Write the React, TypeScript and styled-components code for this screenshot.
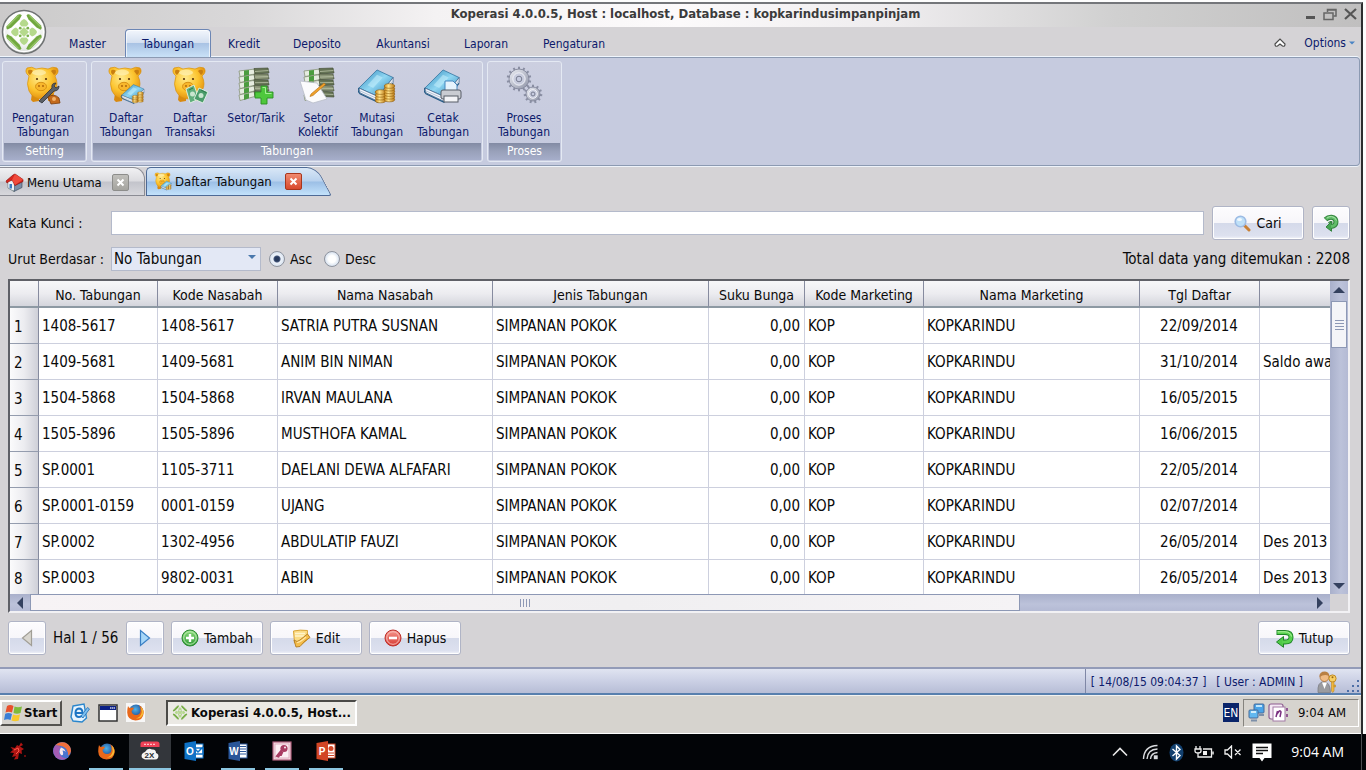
import React from 'react';
import styled, { createGlobalStyle, css } from 'styled-components';

const ui = '"DejaVu Sans Condensed", "DejaVu Sans", "Noto Sans", sans-serif';
const navy = '#0c1a6b';

const GlobalStyle = createGlobalStyle`
  *, *::before, *::after { box-sizing: border-box; }
  html, body { margin: 0; padding: 0; }
  body { background: #fdfdfd; font-family: ${ui}; color: #0a0a0a; }
  button, input, select { font-family: inherit; color: inherit; margin: 0; }
  button { cursor: default; }
`;

/* ---------- shell ---------- */

const Screen = styled.div`
  display: flex;
  flex-direction: column;
  height: 100vh;
  min-width: 960px;
  overflow: hidden;
`;

const Session = styled.div`
  flex: 1;
  min-height: 0;
  display: flex;
  flex-direction: column;
  margin: 2px 3px 0 0;
  border-top: 2px solid #74767a;
  border-right: 2px solid #2c2c2e;
  background: #d5d3d6;
`;

const AppWindow = styled.main`
  flex: 1;
  min-height: 0;
  display: flex;
  flex-direction: column;
`;

/* ---------- title + menu ---------- */

const Head = styled.header`
  position: relative;
  flex: none;
`;

const TitleBar = styled.div`
  height: 23px;
  display: flex;
  justify-content: flex-end;
  align-items: center;
  position: relative;
  background: linear-gradient(90deg, #cbcaca 0%, #d9d8d9 18%, #f4f2f3 32%, #fcfafb 50%, #eeecee 66%, #d0d0d0 82%, #c0bfbf 100%);
`;

const Title = styled.h1`
  flex: 1;
  margin: 0;
  padding: 0 0 3px 94px;
  text-align: center;
  font: bold 13px/20px ${ui};
  color: #3b3b3b;
  white-space: nowrap;
`;

const WindowButtons = styled.div`
  display: flex;
  width: 84px;
  padding: 0 4px 3px 29px;
  justify-content: space-between;
`;

const PlainButton = styled.button`
  border: 0;
  padding: 0;
  background: none;
  display: flex;
  align-items: center;
  justify-content: center;
`;

const Orb = styled.button`
  position: absolute;
  z-index: 2;
  left: 1px;
  top: 5px;
  width: 46px;
  height: 46px;
  padding: 0;
  border: 0;
  background: none;
`;

const MenuBar = styled.nav`
  height: 30px;
  display: flex;
  align-items: flex-end;
  padding: 0 6px 0 50px;
`;

const MenuTab = styled.button<{ $w: number; $active?: boolean }>`
  width: ${p => p.$w}px;
  height: 28px;
  padding: 0;
  border: 1px solid transparent;
  border-bottom: 0;
  border-radius: 4px 4px 0 0;
  background: none;
  font-size: 12px;
  color: ${navy};
  ${p => p.$active && css`
    border-color: #6c86b4;
    background: linear-gradient(180deg, #f2f6fc 0%, #d3dff0 48%, #a9c3e4 50%, #c9e1f7 100%);
    box-shadow: inset 1px 1px 0 #ffffffaa, inset -1px 0 0 #ffffffaa;
  `}
`;

const MenuRight = styled.div`
  margin-left: auto;
  height: 28px;
  display: flex;
  align-items: center;
  gap: 18px;
`;

const OptionsButton = styled(PlainButton)`
  gap: 3px;
  font-size: 12px;
  color: ${navy};
`;

/* ---------- ribbon ---------- */

const Ribbon = styled.section`
  flex: none;
  height: 109px;
  margin-right: 1px;
  padding: 3px 2px;
  display: flex;
  gap: 4px;
  border: 1px solid #8c9ab2;
  border-left: 0;
  border-radius: 0 4px 4px 0;
  background: #c6cbdf;
  box-shadow: 0 -1px 0 #f0f6fd, 0 1px 0 #eef3fa;
`;

const Group = styled.section<{ $w: number }>`
  width: ${p => p.$w}px;
  height: 101px;
  display: flex;
  flex-direction: column;
  border: 1px solid #e4e9f3;
  border-radius: 3px;
  background: linear-gradient(180deg, #cccfe0, #c4c9de);
`;

const GroupItems = styled.div`
  flex: 1;
  display: flex;
`;

const GroupTitle = styled.h2`
  margin: 0 1px 1px;
  height: 17px;
  font: 12px/17px ${ui};
  text-align: center;
  color: #fff;
  background: linear-gradient(180deg, #828ba4, #99a1ba 50%, #a6aeca);
`;

const RibbonButton = styled.button<{ $w: number }>`
  width: ${p => p.$w}px;
  height: 80px;
  padding: 4px 0 0;
  border: 0;
  background: none;
  display: flex;
  flex-direction: column;
  align-items: center;
  gap: 6px;
  font-size: 12px;
  line-height: 14px;
  color: ${navy};
  white-space: pre;
  svg { display: block; flex: none; }
`;

/* ---------- document tabs ---------- */

const activeTabFill = 'linear-gradient(180deg, #d9e7f6 0%, #b9d2ee 48%, #9cbfe6 52%, #c3e2fb 100%)';

const DocTabs = styled.nav`
  flex: none;
  display: flex;
  height: 29px;
  margin-top: 1px;
`;

const DocTab = styled.div<{ $w: number; $active?: boolean }>`
  position: relative;
  z-index: 0;
  width: ${p => p.$w}px;
  height: 29px;
  padding: ${p => (p.$active ? '0 30px 0 8px' : '2px 17px 0 5px')};
  display: flex;
  align-items: center;
  &::before {
    content: '';
    position: absolute;
    z-index: -1;
    inset: 0 1px 0 0;
    border: 1px solid #8b8c94;
    border-left: 0;
    border-radius: 0 12px 0 0;
    background: linear-gradient(180deg, #f1f1f3 0%, #dcdce0 48%, #c3c4cb 52%, #d7d7dc 100%);
  }
  ${p => p.$active && css`
    &::before {
      inset: 0 0 0 60px;
      border-color: #4e6a96;
      border-radius: 0 10px 3px 0;
      transform: skewX(28deg);
      transform-origin: left bottom;
      background: ${activeTabFill};
    }
    &::after {
      content: '';
      position: absolute;
      z-index: -1;
      inset: 0 60px 0 0;
      border: 1px solid #4e6a96;
      border-right: 0;
      border-radius: 5px 0 0 0;
      background: ${activeTabFill};
    }
  `}
`;

const DocTabLabel = styled(PlainButton)`
  gap: 3px;
  font-size: 13px;
  white-space: nowrap;
`;

const CloseBox = styled.button<{ $hot?: boolean }>`
  width: 17px;
  height: 17px;
  margin-left: auto;
  padding: 0;
  display: flex;
  align-items: center;
  justify-content: center;
  border-radius: 2px;
  border: 1px solid ${p => (p.$hot ? '#a8361d' : '#8d8d8b')};
  background: ${p => (p.$hot ? 'linear-gradient(#f08a70, #d8492c)' : 'linear-gradient(#c0bfbb, #a5a49f)')};
`;

/* ---------- search ---------- */

const Panel = styled.section`
  flex: 1;
  min-height: 0;
  display: flex;
  flex-direction: column;
  padding: 10px 11px 12px 8px;
`;

const SearchRow = styled.form`
  display: flex;
  align-items: center;
  height: 34px;
  gap: 8px;
`;

const FieldLabel = styled.label`
  width: 95px;
  font-size: 14px;
  white-space: nowrap;
`;

const TextBox = styled.input`
  flex: 1;
  min-width: 0;
  height: 24px;
  padding: 0 4px;
  border: 1px solid #b4bacb;
  background: #fff;
  font-size: 14px;
`;

const PushButton = styled.button<{ $w: number }>`
  width: ${p => p.$w}px;
  height: 34px;
  flex: none;
  padding: 0;
  display: flex;
  align-items: center;
  justify-content: center;
  gap: 5px;
  font-size: 14px;
  border: 1px solid #b0b4c6;
  border-radius: 3px;
  background: linear-gradient(180deg, #fdfcfe 0%, #f7f6fa 49%, #d5daea 51%, #dde1ef 90%, #f4f5fa 100%);
  box-shadow: inset 0 0 0 1px #ffffff;
`;

const SortRow = styled.div`
  display: flex;
  align-items: center;
  height: 24px;
  margin: 7px 0 8px;
  gap: 8px;
  font-size: 14px;
`;

const SelectWrap = styled.div`
  display: grid;
  width: 150px;
  align-items: center;
  > * { grid-area: 1 / 1; }
  > svg { justify-self: end; margin: 0 5px 4px 0; pointer-events: none; }
`;

const Select = styled.select`
  appearance: none;
  width: 100%;
  height: 24px;
  padding: 0 20px 0 2px;
  border: 1px solid #b4bacb;
  border-radius: 0;
  background: #e3e8f5;
  font-size: 15px;
`;

const RadioLabel = styled.label`
  display: flex;
  align-items: center;
  gap: 5px;
  margin-right: 4px;
`;

const Radio = styled.input`
  appearance: none;
  width: 16px;
  height: 16px;
  border: 1px solid #8e939e;
  border-radius: 50%;
  background: radial-gradient(circle, #fff 0 35%, #d4dfee 75%);
  &:checked { background: radial-gradient(circle, #27395c 0 2px, #44567a 3px, #eef3fa 4px, #d4dfee 8px); }
`;

const Total = styled.output`
  margin-left: auto;
  font-size: 15px;
`;

/* ---------- grid ---------- */

const GridFrame = styled.div`
  flex: 1;
  min-height: 0;
  display: grid;
  grid-template-columns: minmax(0, 1fr) 18px;
  grid-template-rows: minmax(0, 1fr) 17px;
  border: 2px solid #f2f1f4;
  border-top-color: #5f6067;
  border-left-color: #5f6067;
  background: #d5d3d6;
`;

const Viewport = styled.div`
  overflow: hidden;
  background: #fff;
`;

const Table = styled.table`
  width: 100%;
  table-layout: fixed;
  border-collapse: separate;
  border-spacing: 0;
  font-size: 15px;
`;

const Th = styled.th`
  height: 27px;
  padding: 2px 0 0;
  font-size: 14px;
  font-weight: normal;
  white-space: nowrap;
  border-right: 1px solid #868b9f;
  border-bottom: 2px solid #8d99a3;
  background: linear-gradient(180deg, #f7f7f9 0%, #ececf0 50%, #d4d5dc 100%);
  &:last-child { border-right: 0; }
`;

const RowHead = styled.th`
  height: 36px;
  padding: 2px 0 0 4px;
  text-align: left;
  font-weight: normal;
  border-right: 1px solid #868b9f;
  border-bottom: 1px solid #949cae;
  background: linear-gradient(90deg, #fbfbfc 0%, #ececf0 50%, #cfd0d8 100%);
`;

const Td = styled.td<{ $align?: 'left' | 'right' | 'center' }>`
  height: 36px;
  padding: 0 4px 0 3px;
  text-align: ${p => p.$align || 'left'};
  white-space: nowrap;
  overflow: hidden;
  border-right: 1px solid #cdd0de;
  border-bottom: 1px solid #cdd0de;
  &:last-child { border-right: 0; padding-right: 0; }
`;

const VScroll = styled.div`
  display: flex;
  flex-direction: column;
  align-items: center;
  background: linear-gradient(90deg, #a9b0cb, #bcc2da 60%, #b4bad4);
`;

const HScroll = styled.div`
  display: flex;
  align-items: center;
  background: linear-gradient(180deg, #a9b0cb, #bcc2da 60%, #b4bad4);
`;

const Arrow = styled(PlainButton)`
  width: 20px;
  height: 17px;
  flex: none;
`;

const ThumbV = styled.div`
  width: 16px;
  height: 47px;
  margin-top: 3px;
  display: flex;
  align-items: center;
  justify-content: center;
  border: 1px solid #8d98b5;
  background: #f4f4f8;
`;

const ThumbH = styled.div`
  width: 75%;
  height: 17px;
  display: flex;
  align-items: center;
  justify-content: center;
  border: 1px solid #8d98b5;
  background: linear-gradient(90deg, #f7f3f5, #f0eff1 60%, #f5f3f5);
`;

const Pusher = styled.span`
  flex: 1;
`;

const Actions = styled.div`
  flex: none;
  display: flex;
  align-items: center;
  gap: 7px;
  margin-top: 8px;
  font-size: 15px;
`;

const PageLabel = styled.span`
  width: 66px;
  white-space: nowrap;
`;

/* ---------- status bar ---------- */

const StatusBar = styled.footer`
  flex: none;
  height: 28px;
  display: flex;
  justify-content: flex-end;
  border-top: 2px solid #939bb8;
  border-bottom: 2px solid #587fae;
  background: linear-gradient(180deg, #e0e4f1 0%, #cdd2e6 45%, #b7bdd6 100%);
`;

const StatusInfo = styled.div`
  display: flex;
  align-items: center;
  gap: 10px;
  padding: 2px 1px 0 5px;
  border-left: 1px solid #7f87a6;
  font-size: 12px;
  color: ${navy};
  white-space: pre;
`;

const UserIcon = styled.span`
  display: flex;
  align-items: flex-end;
  gap: 10px;
  height: 22px;
  margin-left: 4px;
`;

/* ---------- session taskbar ---------- */

const ClassicBar = styled.footer`
  flex: none;
  height: 39px;
  padding: 3px 2px 7px 0;
  display: flex;
  align-items: center;
  border-top: 1px solid #f3f2ef;
  border-bottom: 1px solid #fff;
  background: #d6d3ce;
`;

const StartButton = styled.button`
  width: 62px;
  height: 26px;
  padding: 0 2px;
  display: flex;
  align-items: center;
  gap: 1px;
  font-size: 13px;
  font-weight: bold;
  border: 2px solid;
  border-color: #fff #55534f #55534f #fff;
  background: #d6d3ce;
`;

const QuickLaunch = styled.div`
  display: flex;
  gap: 8px;
  width: 104px;
  padding-left: 8px;
`;

const TaskButton = styled.button`
  width: 191px;
  height: 26px;
  padding: 0 4px;
  display: flex;
  align-items: center;
  gap: 3px;
  font-size: 13px;
  font-weight: bold;
  white-space: nowrap;
  border: 2px solid;
  border-color: #4b4a47 #fff #fff #4b4a47;
  background: #ebe9e4;
`;

const Language = styled.button`
  width: 16px;
  height: 19px;
  margin: 0 4px 0 auto;
  padding: 0;
  border: 0;
  background: #0a246a;
  color: #fff;
  font-size: 12px;
`;

const ClassicTray = styled.div`
  width: 116px;
  height: 28px;
  padding: 0 12px 0 4px;
  display: flex;
  align-items: center;
  gap: 2px;
  font-size: 13px;
  border: 1px solid;
  border-color: #85837e #fff #fff #85837e;
  time { margin-left: auto; }
`;

/* ---------- host taskbar ---------- */

const HostBar = styled.footer`
  flex: none;
  height: 36px;
  display: flex;
  padding-right: 4px;
  background: #020407;
  color: #fff;
`;

const HostApp = styled.button<{ $open?: boolean; $active?: boolean }>`
  width: ${p => (p.$active ? 42 : 34)}px;
  margin: 0 ${p => (p.$active ? 1 : 5)}px;
  padding: 0;
  display: flex;
  align-items: center;
  justify-content: center;
  border: 0;
  border-bottom: 2px solid ${p => (p.$open ? '#8cc6e0' : 'transparent')};
  background: ${p => (p.$active ? '#33363b' : 'transparent')};
`;

const HostApps = styled.nav`
  display: flex;
  margin-left: -4px;
`;

const HostTray = styled.div`
  margin-left: auto;
  display: flex;
  align-items: center;
  gap: 8px;
  border-right: 1px solid #4a4c50;
  padding-right: 17px;
  font: 14px/20px "Open Sans", "Noto Sans", sans-serif;
  > svg:nth-of-type(n + 3) { margin-left: 2px; }
  > svg:first-child { margin-right: 6px; }
  time { margin-left: 11px; }
`;

/* ---------- drawings ---------- */

const HiddenSvg = styled.svg`
  position: absolute;
`;

const Defs = () => (
  <HiddenSvg width="0" height="0" aria-hidden="true">
    <defs>
      <radialGradient id="pigG" cx="0.4" cy="0.35" r="0.7">
        <stop offset="0" stopColor="#ffe98a" />
        <stop offset="0.55" stopColor="#fcc42f" />
        <stop offset="1" stopColor="#e08a0c" />
      </radialGradient>
      <linearGradient id="bookG" x1="0" y1="0" x2="1" y2="1">
        <stop offset="0" stopColor="#2f86b8" />
        <stop offset="0.5" stopColor="#8fd6f2" />
        <stop offset="1" stopColor="#2a7fb2" />
      </linearGradient>
      <linearGradient id="goldG" x1="0" y1="0" x2="1" y2="0">
        <stop offset="0" stopColor="#c98412" />
        <stop offset="0.4" stopColor="#ffe48c" />
        <stop offset="1" stopColor="#b87410" />
      </linearGradient>
      <radialGradient id="orbG" cx="0.5" cy="0.4" r="0.6">
        <stop offset="0.5" stopColor="#ffffff" />
        <stop offset="0.85" stopColor="#e4e7e4" />
        <stop offset="1" stopColor="#a9adab" />
      </radialGradient>
      <linearGradient id="greenG" x1="0" y1="0" x2="0" y2="1">
        <stop offset="0" stopColor="#8fdc7d" />
        <stop offset="1" stopColor="#2b9a34" />
      </linearGradient>
      <linearGradient id="redG" x1="0" y1="0" x2="0" y2="1">
        <stop offset="0" stopColor="#f59a90" />
        <stop offset="1" stopColor="#d6372f" />
      </linearGradient>
      <linearGradient id="steelG" x1="0" y1="0" x2="1" y2="1">
        <stop offset="0" stopColor="#eef0f6" />
        <stop offset="1" stopColor="#8e93a6" />
      </linearGradient>
      <radialGradient id="foxG" cx="0.45" cy="0.35" r="0.6">
        <stop offset="0" stopColor="#4fb3ea" />
        <stop offset="1" stopColor="#15408c" />
      </radialGradient>
    </defs>
  </HiddenSvg>
);

const Cross = () => (
  <g>
    {[0, 90, 180, 270].map(a => (
      <g key={a} transform={`rotate(${a} 23 23)`}>
        <path d="M5.500 17.500 L16.500 6 Q19 4.500 20.800 6.200 L18.500 10.500 L10.500 18.500 L6.500 20.500 Q4.800 19.500 5.500 17.500Z" fill="#72a83f" />
        <path d="M6.500 17.500 L17.500 6.500" stroke="#94c466" strokeWidth="1.200" fill="none" />
        <path d="M23 10 Q26 11 27.500 15 L25.500 17.500 L20.500 17.500 L18.500 15 Q20 11 23 10Z" fill="#b5d98c" />
        <circle cx="19.200" cy="19.200" r="1.400" fill="#7bb04c" />
      </g>
    ))}
    <path d="M23 18 L28 23 L23 28 L18 23Z" fill="#b5d98c" />
  </g>
);

const OrbIcon = () => (
  <svg width="46" height="46" viewBox="0 0 46 46">
    <circle cx="23" cy="23" r="21.500" fill="url(#orbG)" stroke="#6f7273" strokeWidth="1.500" />
    <circle cx="23" cy="23" r="19.500" fill="none" stroke="#fff" strokeWidth="1.500" />
    <Cross />
  </svg>
);

const Pig = () => (
  <g>
    <path d="M7 34 L8 27 L15 30 L15 35 L9 36Z M24 35 L24 28 L30 27 L29 34Z" fill="#d98a10" />
    <path d="M3 2 Q8 0 12 3 Q18 1 24 3 Q29 0 33 2 Q36 6 31 10 Q35 18 31 25 Q26 33 18 33 Q9 33 5 25 Q2 18 5 10 Q0 6 3 2Z" fill="url(#pigG)" stroke="#d8920f" strokeWidth="0.700" />
    <path d="M4.500 4 Q7 3 9 5 L6 9 Q3 7 4.500 4Z M31.500 4 Q29 3 27 5 L30 9 Q33 7 31.500 4Z" fill="#c97f10" />
    <ellipse cx="15" cy="6.500" rx="7" ry="3" fill="#fff6c4" opacity="0.600" />
    <circle cx="13" cy="13" r="1.100" fill="#59340a" />
    <circle cx="22" cy="13" r="1.100" fill="#59340a" />
    <ellipse cx="17" cy="20.500" rx="5.500" ry="4.200" fill="#f8b72c" stroke="#cf860d" strokeWidth="0.800" />
    <circle cx="15" cy="20" r="0.900" fill="#a85f08" />
    <circle cx="19" cy="20" r="0.900" fill="#a85f08" />
  </g>
);

const Book = () => (
  <g>
    <path d="M1 20 L20 1 L37 9 L21 29Z" fill="url(#bookG)" stroke="#2b6f9c" strokeWidth="0.800" />
    <path d="M1 20 L21 29 L37 9 L37 14 L21 34 L2 25Z" fill="#f2f5fa" stroke="#41658c" strokeWidth="0.800" />
    <path d="M2 23 L21 31.500 L37 12" fill="none" stroke="#9fb4cc" strokeWidth="0.800" />
    <path d="M1 20 Q-1 23 2 26 L21 35 L37 15" fill="none" stroke="#235a85" strokeWidth="1.200" />
    <path d="M10 17 L20 6 L26 9 L16 20Z" fill="#c7effc" opacity="0.550" />
  </g>
);

const Coins = () => (
  <g stroke="#8f5c0b" strokeWidth="0.600" fill="url(#goldG)">
    {[0, 1, 2, 3].map(i => <ellipse key={i} cx="5.500" cy={16.500 - i * 2.800} rx="5.200" ry="2.300" />)}
    {[0, 1, 2, 3, 4, 5].map(i => <ellipse key={i} cx="14.500" cy={15.500 - i * 2.700} rx="5.200" ry="2.300" />)}
  </g>
);

const Bills = () => (
  <g>
    <path d="M1 4 L9 0 L14 14 L5 18Z" fill="#5fae7c" stroke="#e4f2e6" strokeWidth="0.900" />
    <path d="M14 3 L23 7 L18 18 L9 14Z" fill="#4b9c6b" stroke="#e4f2e6" strokeWidth="0.900" />
    <circle cx="7.500" cy="9" r="2.500" fill="#c9e6cf" />
    <circle cx="16" cy="10.500" r="2.500" fill="#c9e6cf" />
    <path d="M4 5 L8 3 M16 5 L21 7.500" stroke="#2f7a4c" strokeWidth="1" />
  </g>
);

const CashStack = () => (
  <g>
    {[0, 1, 2, 3, 4].map(i => (
      <g key={i}>
        <path d={`M2 ${5 + i * 6} L18 ${3 + i * 5.600} L18 ${8 + i * 5.600} L3 ${10.500 + i * 6}Z`} fill="#e6ece0" stroke="#7d8a6c" strokeWidth="0.700" />
        <path d={`M7 ${4.500 + i * 6} L12 ${4 + i * 5.800} L12 ${9 + i * 5.800} L7 ${10 + i * 6}Z`} fill="#4b9c3e" />
        <path d={`M17 ${2.500 + i * 5.600} L31 ${2 + i * 6} L32 ${7 + i * 6} L18 ${8 + i * 5.600}Z`} fill={i % 2 ? '#8a9477' : '#657355'} stroke="#47523a" strokeWidth="0.700" />
        <path d={`M18 ${5.500 + i * 5.600} L31.500 ${4.500 + i * 6}`} stroke="#b9c2a6" strokeWidth="0.800" />
      </g>
    ))}
  </g>
);

const gear = (cx: number, cy: number, r: number, teeth: number) => {
  const items: React.ReactNode[] = [];
  for (let i = 0; i < teeth; i += 1) {
    items.push(
      <rect key={i} x={cx - 1} y={cy - r - 2.300} width="2" height="4" fill="#8a8fa3" transform={`rotate(${(360 / teeth) * i} ${cx} ${cy})`} />,
    );
  }
  return (
    <g>
      {items}
      <circle cx={cx} cy={cy} r={r} fill="url(#steelG)" stroke="#82879b" strokeWidth="0.900" />
      <circle cx={cx} cy={cy} r={r * 0.620} fill="#c9cdde" stroke="#f4f5f9" strokeWidth="0.900" />
      <circle cx={cx} cy={cy} r={r * 0.280} fill="#c6cbdf" stroke="#777c90" strokeWidth="1" />
    </g>
  );
};

type IconKind = 'setup' | 'pigbook' | 'pigcash' | 'cashplus' | 'cashnote' | 'bookcoins' | 'bookprint' | 'gears';

const RibbonIcon = ({ kind }: { kind: IconKind }) => (
  <svg width="38" height="39" viewBox="0 0 38 39">
    {(kind === 'setup' || kind === 'pigbook' || kind === 'pigcash') && <Pig />}
    {kind === 'setup' && (
      <g>
        <path d="M15 35 L28 22 Q27 17 32 17 L30 20 L32 22 L35 20 Q35 25 30 25 L18 37Z" fill="#5b5f66" stroke="#2f3237" strokeWidth="0.800" />
        <path d="M24 31 Q30 27 35 32 L36 37 L27 38Z" fill="#c46a1c" stroke="#7d3d0a" strokeWidth="0.800" />
        <circle cx="30" cy="33" r="2" fill="#f3b26a" />
      </g>
    )}
    {kind === 'pigbook' && (
      <g>
        <g transform="translate(14 18) scale(0.620 0.560)"><Book /></g>
        <g transform="translate(25 26) scale(0.580)"><Coins /></g>
      </g>
    )}
    {kind === 'pigcash' && <g transform="translate(14 19)"><Bills /></g>}
    {kind === 'cashplus' && (
      <g>
        <CashStack />
        <path d="M24 20 H30 V26 H36 V32 H30 V38 H24 V32 H18 V26 H24Z" fill="#4ec83c" stroke="#2a8f22" strokeWidth="0.900" />
        <path d="M25.500 21.500 H28.500 V27.500 H34.500" fill="none" stroke="#a4ee94" strokeWidth="1" />
      </g>
    )}
    {kind === 'cashnote' && (
      <g>
        <g transform="translate(3 0)"><CashStack /></g>
        <path d="M1 15 L18 17 L28 33 L14 37 L7 34Z" fill="#fbfbfd" stroke="#b8bcc8" strokeWidth="0.800" />
        <path d="M12 28 L25 17 L26.500 18.500 L14 29.500 L11 30.500Z" fill="#f0a12b" stroke="#b06c10" strokeWidth="0.600" />
      </g>
    )}
    {(kind === 'bookcoins' || kind === 'bookprint') && <g transform="translate(0 3) scale(0.950)"><Book /></g>}
    {kind === 'bookcoins' && <g transform="translate(17 18)"><Coins /></g>}
    {kind === 'bookprint' && (
      <g>
        <path d="M21 15 H29 L33 19 V27 H21Z" fill="#e6f3fd" stroke="#4687bf" strokeWidth="1" />
        <rect x="17" y="24" width="20" height="9" rx="2" fill="#c9ccd2" stroke="#575c66" strokeWidth="1" />
        <rect x="20" y="30" width="14" height="6" fill="#f3f4f7" stroke="#575c66" strokeWidth="1" />
      </g>
    )}
    {kind === 'gears' && (
      <g>
        {gear(14, 13, 10, 14)}
        {gear(28, 28, 7, 11)}
      </g>
    )}
  </svg>
);

const Chevron = ({ dir, c = '#34415f', s = 12 }: { dir: 'up' | 'down' | 'left' | 'right'; c?: string; s?: number }) => {
  const turn = { up: 0, right: 90, down: 180, left: 270 }[dir];
  return (
    <svg width={s} height={s} viewBox="0 0 12 12">
      <path d="M0 9 L6 3 L12 9Z" fill={c} transform={`rotate(${turn} 6 6)`} />
    </svg>
  );
};

const XMark = () => (
  <svg width="9" height="9" viewBox="0 0 9 9"><path d="M1.500 1.500 L7.500 7.500 M7.500 1.500 L1.500 7.500" stroke="#fff" strokeWidth="2" /></svg>
);

const HouseIcon = () => (
  <svg width="19" height="19" viewBox="0 0 19 19">
    <path d="M3 8 L9 12 V18.500 L3 15Z" fill="#dfe6ee" stroke="#566" strokeWidth="0.600" />
    <path d="M9 12 L17 8 V14.500 L9 18.500Z" fill="#7c8ea8" stroke="#345" strokeWidth="0.600" />
    <path d="M1 8 L8 2 L10 1 L18 6.500 L18 8.500 L10 12.500 L7 7 L2 10Z" fill="#d8261e" stroke="#8d120e" strokeWidth="0.700" />
    <path d="M7 7 L10 1 L18 6.500 L10 12Z" fill="#ef4a3c" />
    <path d="M3.500 9 L7 8 L9 12 V17.500 L3.500 14.500Z" fill="#eef2f7" />
    <rect x="4.500" y="11" width="2.500" height="4.500" fill="#3b7bc0" />
  </svg>
);

const MiniPig = () => (
  <svg width="18" height="19" viewBox="0 0 38 39">
    <Pig />
    <g transform="translate(14 18) scale(0.620 0.560)"><Book /></g>
    <g transform="translate(25 26) scale(0.580)"><Coins /></g>
  </svg>
);

const SearchIcon = () => (
  <svg width="17" height="17" viewBox="0 0 17 17">
    <path d="M10 10 L15 15" stroke="#c98035" strokeWidth="3" strokeLinecap="round" />
    <circle cx="6.500" cy="6.500" r="5.300" fill="#bfe0f8" stroke="#9dbbe4" strokeWidth="1.600" />
    <ellipse cx="5.500" cy="4.500" rx="2.500" ry="1.600" fill="#fff" opacity="0.800" />
  </svg>
);

const RefreshIcon = () => (
  <svg width="16" height="18" viewBox="0 0 16 18" fill="none">
    <path d="M2.500 5.500 Q5 3 8.500 3.200 Q13 3.800 13 8 Q12.800 12 8 12.500" stroke="#35853f" strokeWidth="5" />
    <path d="M8.500 7.500 L8.500 17.300 L3 13Z" fill="#46a552" stroke="#35853f" strokeWidth="1" />
    <path d="M3 5 Q5 3 8.500 3.200 Q13 3.800 13 8 Q12.800 12 8 12.500" stroke="#62bd6a" strokeWidth="3" />
    <path d="M4 4 Q6 2.300 8.500 2.500 Q12.500 3 13.500 6.500" stroke="#a9e2a8" strokeWidth="1" />
    <path d="M5.500 9 Q7.500 6.500 9.500 8.500" stroke="#35853f" strokeWidth="1.300" />
  </svg>
);

const ReturnIcon = () => (
  <svg width="19" height="19" viewBox="0 0 19 19" fill="none">
    <path d="M1.500 3.500 H10 Q16 3.500 16 8.200 Q16 13 10 13 H8" stroke="#1f8428" strokeWidth="5" />
    <path d="M8.500 7.500 V18.300 L1.500 13Z" fill="#4fca47" stroke="#1f8428" strokeWidth="1" />
    <path d="M2.300 3.500 H10 Q16 3.500 16 8.200 Q16 13 10 13 H7" stroke="#58d24e" strokeWidth="3.200" />
    <path d="M2.500 2.800 H10 Q15.500 3 16.500 7.500" stroke="#b6f2a6" strokeWidth="1" />
  </svg>
);

const AddIcon = () => (
  <svg width="18" height="18" viewBox="0 0 18 18">
    <circle cx="9" cy="9" r="8" fill="url(#greenG)" stroke="#2c8a33" strokeWidth="1" />
    <circle cx="9" cy="9" r="6.300" fill="none" stroke="#c8f0bd" strokeWidth="0.900" />
    <path d="M9 5 V13 M5 9 H13" stroke="#fff" strokeWidth="2.400" />
  </svg>
);

const RemoveIcon = () => (
  <svg width="18" height="18" viewBox="0 0 18 18">
    <circle cx="9" cy="9" r="8" fill="url(#redG)" stroke="#bd2f2a" strokeWidth="1" />
    <circle cx="9" cy="9" r="6.300" fill="none" stroke="#fbc5bf" strokeWidth="0.900" />
    <path d="M5 9 H13" stroke="#fff" strokeWidth="2.600" />
  </svg>
);

const EditIcon = () => (
  <svg width="19" height="19" viewBox="0 0 19 19">
    <path d="M1.500 2 Q8 0.500 15.500 1.500 L15 11 L10 15 L2.500 14Z" fill="#fbdc86" stroke="#d9a53a" strokeWidth="1" />
    <path d="M3 4.500 H13 M3 7 H12" stroke="#fff3cb" strokeWidth="1.300" />
    <path d="M2 11 Q5 14 8 11 L15.500 5 L18 8.500 L13 12 L8 17.500 L4 18Z" fill="#f4bd4b" stroke="#b37a1e" strokeWidth="0.900" />
    <path d="M5 13.500 Q8 13.500 14 8" fill="none" stroke="#ffe7a8" strokeWidth="1.200" />
  </svg>
);

const PageArrow = ({ left }: { left?: boolean }) => (
  <svg width="12" height="18" viewBox="0 0 12 18">
    {left
      ? <path d="M10.500 1.500 V16.500 L1.500 9Z" fill="#d9d6cf" stroke="#a19e96" strokeWidth="1.200" />
      : <path d="M1.500 1.500 V16.500 L10.500 9Z" fill="#a6d6f8" stroke="#3a7fc4" strokeWidth="1.200" />}
  </svg>
);

const UserKey = () => (
  <svg width="20" height="22" viewBox="0 0 20 22">
    <path d="M1 21.500 Q0 11 7 10.500 Q13 11 13.500 21.500Z" fill="#9a9ba0" stroke="#77797f" strokeWidth="0.700" />
    <path d="M5 11.500 L7.500 18 L10 11.500Z" fill="#fff" />
    <circle cx="7.500" cy="6" r="4.500" fill="#f0bb85" stroke="#a8682c" strokeWidth="0.700" />
    <path d="M2.500 6 Q2 0.500 8 0.500 Q12.500 1 12.300 5.500 Q8 2.500 2.500 6Z" fill="#b98044" />
    <circle cx="15.500" cy="7.500" r="3.600" fill="#f7cf66" stroke="#c08a22" strokeWidth="1" />
    <circle cx="15.500" cy="6.300" r="1" fill="#9a6a14" />
    <path d="M14.500 11 H17 V20 L15.700 21.500 L14.500 20Z M17 14 H18.500 V16 H17Z" fill="#f0b840" stroke="#c08a22" strokeWidth="0.600" />
  </svg>
);

const Grip = () => (
  <svg width="13" height="13" viewBox="0 0 13 13" fill="#4d6ea6">
    {[[10, 0], [5, 5], [10, 5], [0, 10], [5, 10], [10, 10]].map(([x, y]) => <rect key={`${x}-${y}`} x={x} y={y} width="2" height="2" />)}
  </svg>
);

const Flag = () => (
  <svg width="19" height="18" viewBox="0 0 19 18">
    <path d="M3 2 Q6 0 9.500 2 L8 8.500 Q5 7 1.500 8.500Z" fill="#e8502c" />
    <path d="M10.500 2.500 Q14 4 18 2.500 L16.500 9 Q13 10.500 9.500 9Z" fill="#7fbb3a" />
    <path d="M1.200 9.800 Q4.500 8 8 10 L6.500 16 Q3.500 14.500 0 16Z" fill="#3b7fd6" />
    <path d="M9 10.500 Q12.500 12 16 10.300 L14.800 16.500 Q11 18 7.500 16.500Z" fill="#f7c92c" />
  </svg>
);

const Desk = () => (
  <svg width="20" height="20" viewBox="0 0 20 20">
    <path d="M3 3 L14 1 L16.500 15 L12 19 L3 18 L1 14Z" fill="#e8f4fd" stroke="#2a86cc" strokeWidth="1.400" />
    <path d="M6 10 H12.500 Q12.500 5.500 9 5.500 Q5.500 6 5.500 10 Q5.500 14 9 14 Q11 14 12 12.500" fill="none" stroke="#1d75c4" strokeWidth="2" />
    <path d="M11 13 L17.500 4.500 L19.500 6 L13 15Z" fill="#7cc0f0" stroke="#1f6fb5" strokeWidth="0.800" />
  </svg>
);

const WindowIcon = () => (
  <svg width="20" height="20" viewBox="0 0 20 20">
    <rect x="1" y="2" width="18" height="16" fill="#fff" stroke="#333" strokeWidth="1.500" />
    <rect x="2" y="3" width="16" height="4" fill="#0a1f86" />
    <path d="M12 5 H17" stroke="#c9cfe8" strokeWidth="1.500" strokeDasharray="1.500 0.500" />
  </svg>
);

const Firefox = ({ plate }: { plate?: boolean }) => (
  <svg width="19" height="19" viewBox="0 0 19 19">
    {plate && <rect width="19" height="19" fill="#f7f7f7" />}
    <circle cx="10" cy="8.500" r="7" fill="url(#foxG)" />
    <path d="M2 3 Q3 5 4 5 Q6 4 8 5 Q7 7 5.500 8 Q6 12 10 12 Q14 12 14.500 8 Q15 5 13 2 Q18 5 17.700 10 Q17 17.500 9.500 17.500 Q1.500 17 1.200 9.500 Q1.200 6 2 3Z" fill="#e8681a" />
    <path d="M15 3.500 Q18 7 17.200 11 Q15 16 10 15.500 Q15 14 15.800 9Z" fill="#f9bd33" />
  </svg>
);

const NetIcon = () => (
  <svg width="18" height="19" viewBox="0 0 18 19">
    <rect x="6" y="1" width="10" height="9" rx="1" fill="#4aa3e8" stroke="#466a9a" strokeWidth="1" />
    <path d="M8 3 H14" stroke="#c2e6fb" strokeWidth="2" />
    <rect x="1" y="7" width="9" height="8" rx="1" fill="#62b8f0" stroke="#466a9a" strokeWidth="1" />
    <path d="M3 9 H8" stroke="#d2eefb" strokeWidth="2" />
    <path d="M3 17.500 H9 M11 12 H16" stroke="#7d8fa8" strokeWidth="2" />
  </svg>
);

const NoteIcon = () => (
  <svg width="20" height="19" viewBox="0 0 20 19">
    <rect x="1" y="1" width="14" height="15" rx="2" fill="#f4e9f4" stroke="#8c5c8f" strokeWidth="1.200" />
    <rect x="5" y="4" width="12" height="14" fill="#fff" stroke="#a37ba6" strokeWidth="1" />
    <path d="M8 14 L9.500 8 M9 11 Q12 6 13 9 L12 14" fill="none" stroke="#7b2f80" strokeWidth="1.500" />
    <path d="M19 5 V8 M19 11 V14" stroke="#7b2f80" strokeWidth="1.500" />
  </svg>
);

const DragonIcon = () => (
  <svg width="19" height="19" viewBox="0 0 19 19">
    <path d="M12 0.500 L14 3 L11 4.500 L15 7 L12.500 8.500 L13 12 L10 11 L9 17 L5 17.500 L7 14 L3 15 L5 11 L1 10.500 L4 8 L1.500 5 L6 6 L8 3 L10 4Z" fill="#b01513" />
    <path d="M5 8 L9 6 L10 9 L7 12" fill="none" stroke="#ff5a4c" strokeWidth="1" />
    <circle cx="16" cy="14" r="1" fill="#8a1010" />
  </svg>
);

const SwirlIcon = () => (
  <svg width="20" height="20" viewBox="0 0 20 20">
    <circle cx="10" cy="10" r="9" fill="#4b74cf" />
    <path d="M3 4.500 Q7 0 13 1.500 Q19 4 19 10 Q18.500 13.500 16 14.500 Q16.500 8 11 5.500 Q7 4 3 4.500Z" fill="#f2703c" />
    <path d="M3 4.500 Q7 4 9 6.500 Q6 9 7.500 13 Q9.500 17 15 17.500 Q9 20.500 4 16.500 Q-1 11 3 4.500Z" fill="#a35cb4" />
    <path d="M9 6.500 Q14 8 13.500 12 Q12 15 9 14 Q6 10.500 9 6.500Z" fill="#fbe9ee" />
    <path d="M10.500 9.500 Q14 9.500 16 14 Q13 17.500 10 15 Q12 13 10.500 9.500Z" fill="#4b74cf" />
  </svg>
);

const svgText = { fontFamily: '"Liberation Sans", sans-serif', fontWeight: 700 };

const TwoXIcon = () => (
  <svg width="20" height="20" viewBox="0 0 20 20">
    <rect x="1" y="1" width="18" height="18" rx="2" fill="#303236" />
    <path d="M0.500 3 Q0.500 0.500 3 0.500 H17 Q19.500 0.500 19.500 3 V6 H0.500Z" fill="#ef4056" />
    <path d="M4 3.300 H16" stroke="#ffc2c8" strokeWidth="1.200" strokeDasharray="2 1" />
    <path d="M4 18 Q0.500 17 2 13 Q4 11 5 11 Q8 6 12 8.500 Q16 8 16 12 Q19.500 13 18 17 Q17 18.500 15 18.500 H5Z" fill="#f5f5f5" />
    <text x="4.500" y="17" fontSize="8" fill="#2b2d31" style={svgText}>2X</text>
  </svg>
);

const OfficeIcon = ({ c, letter, detail }: { c: string; letter: string; detail: 'mail' | 'doc' | 'chart' }) => (
  <svg width="20" height="20" viewBox="0 0 20 20">
    <rect x="10" y="3" width="9" height="14" fill="#fff" stroke={c} strokeWidth="1" />
    {detail === 'mail' && <path d="M10 7 H19 V13 H10 M11 8 L14 11 L19 6" fill="none" stroke={c} strokeWidth="1.500" />}
    {detail === 'doc' && <path d="M12 5.500 H18 M12 8 H18 M12 10.500 H18 M12 13 H18" stroke={c} strokeWidth="1.200" />}
    {detail === 'chart' && (
      <g><circle cx="15" cy="7.500" r="2.500" fill={c} /><path d="M12 12 H18 M12 14.500 H18" stroke={c} strokeWidth="1.200" /></g>
    )}
    <path d="M0.500 2 L12 0 V20 L0.500 18Z" fill={c} />
    <text x="6" y="13.500" fontSize="10" textAnchor="middle" fill="#fff" style={svgText}>{letter}</text>
  </svg>
);

const AccessIcon = () => (
  <svg width="20" height="20" viewBox="0 0 20 20">
    <rect x="1" y="1" width="18" height="18" fill="#f5dfe6" stroke="#b0607c" strokeWidth="1.200" />
    <rect x="3" y="3" width="14" height="14" fill="#fbeff3" stroke="#d9a3b5" strokeWidth="0.800" />
    <circle cx="12" cy="7.500" r="3.600" fill="#a83c62" />
    <circle cx="13" cy="6.500" r="1" fill="#fbeff3" />
    <path d="M9.500 9.500 L5 15 L6.500 15.500 L7.500 14 L9 14 L10.500 10.500" fill="none" stroke="#a83c62" strokeWidth="2" />
  </svg>
);

const WifiIcon = () => (
  <svg width="17" height="18" viewBox="0 0 17 18" fill="none" stroke="#d9dbde" strokeWidth="1.400">
    <path d="M1.500 16 Q2 3 15.500 2.500 M5 16 Q5.500 6.500 15.500 6 M8.500 16 Q9 10 15.500 9.500" />
    <rect x="12.500" y="13" width="2.500" height="2.500" fill="#d9dbde" />
  </svg>
);

const BluetoothIcon = () => (
  <svg width="15" height="19" viewBox="0 0 15 19">
    <ellipse cx="7.500" cy="9.500" rx="7" ry="9" fill="#12406f" />
    <path d="M3.500 6 L11 12.500 L7.500 16 V3 L11 6.500 L3.500 13" fill="none" stroke="#fff" strokeWidth="1.400" />
  </svg>
);

const BatteryIcon = () => (
  <svg width="20" height="14" viewBox="0 0 20 14" fill="none" stroke="#f0f0f0" strokeWidth="1.300">
    <path d="M2 1 V4 M6 1 V4 M1 4 H7 V6 Q7 8 4 8 Q1 8 1 6Z M4 8 V12 H7" />
    <path d="M9 4 H17.500 V12 H7" />
    <path d="M19 6.500 V9.500" strokeWidth="1.500" />
    <rect x="9" y="6" width="4" height="4" fill="#f0f0f0" stroke="none" />
  </svg>
);

const MuteIcon = () => (
  <svg width="18" height="14" viewBox="0 0 18 14" fill="none" stroke="#f0f0f0" strokeWidth="1.300">
    <path d="M1 5 H3.500 L7.500 1 V13 L3.500 9 H1Z M11 4.500 L16.500 10 M16.500 4.500 L11 10" />
  </svg>
);

const ActionIcon = () => (
  <svg width="20" height="19" viewBox="0 0 20 19">
    <path d="M0.500 0.500 H19.500 V15 H12.500 L10 18.500 L7.500 15 H0.500Z" fill="#fff" />
    <path d="M4 4.500 H16 M4 7.500 H16 M4 10.500 H11" stroke="#111" strokeWidth="1.300" />
  </svg>
);

/* ---------- data ---------- */

const menu: [string, number][] = [
  ['Master', 75], ['Tabungan', 86], ['Kredit', 66], ['Deposito', 80], ['Akuntansi', 92], ['Laporan', 74], ['Pengaturan', 102],
];

const groups: { title: string; w: number; items: [string, IconKind, number][] }[] = [
  { title: 'Setting', w: 85, items: [['Pengaturan\nTabungan', 'setup', 80]] },
  {
    title: 'Tabungan',
    w: 392,
    items: [
      ['Daftar\nTabungan', 'pigbook', 68],
      ['Daftar\nTransaksi', 'pigcash', 60],
      ['Setor/Tarik', 'cashplus', 72],
      ['Setor\nKolektif', 'cashnote', 52],
      ['Mutasi\nTabungan', 'bookcoins', 66],
      ['Cetak\nTabungan', 'bookprint', 66],
    ],
  },
  { title: 'Proses', w: 75, items: [['Proses\nTabungan', 'gears', 72]] },
];

const columns: [string, number | undefined][] = [
  ['', 29], ['No. Tabungan', 119], ['Kode Nasabah', 120], ['Nama Nasabah', 215], ['Jenis Tabungan', 216],
  ['Suku Bunga', 96], ['Kode Marketing', 119], ['Nama Marketing', 216], ['Tgl Daftar', 120], ['', undefined],
];

const rows: string[][] = [
  ['1408-5617', '1408-5617', 'SATRIA PUTRA SUSNAN', '22/09/2014', ''],
  ['1409-5681', '1409-5681', 'ANIM BIN NIMAN', '31/10/2014', 'Saldo awal'],
  ['1504-5868', '1504-5868', 'IRVAN MAULANA', '16/05/2015', ''],
  ['1505-5896', '1505-5896', 'MUSTHOFA KAMAL', '16/06/2015', ''],
  ['SP.0001', '1105-3711', 'DAELANI DEWA ALFAFARI', '22/05/2014', ''],
  ['SP.0001-0159', '0001-0159', 'UJANG', '02/07/2014', ''],
  ['SP.0002', '1302-4956', 'ABDULATIP FAUZI', '26/05/2014', 'Des 2013'],
  ['SP.0003', '9802-0031', 'ABIN', '26/05/2014', 'Des 2013'],
];

export default function App() {
  return (
    <Screen>
      <GlobalStyle />
      <Defs />
      <Session>
        <AppWindow>
          <Head>
            <TitleBar>
              <Title>Koperasi 4.0.0.5, Host : localhost, Database : kopkarindusimpanpinjam</Title>
              <WindowButtons>
                <PlainButton type="button" aria-label="Minimize">
                  <svg width="10" height="12" viewBox="0 0 10 12"><rect y="8" width="9" height="3" fill="#555" /></svg>
                </PlainButton>
                <PlainButton type="button" aria-label="Restore">
                  <svg width="14" height="13" viewBox="0 0 14 13" fill="none" stroke="#666" strokeWidth="1.500">
                    <path d="M4.500 4 V1.500 H13 V8 H10.500 M4.500 2 H13" /><rect x="1" y="5" width="9" height="6.500" />
                  </svg>
                </PlainButton>
                <PlainButton type="button" aria-label="Close">
                  <svg width="13" height="12" viewBox="0 0 13 12"><path d="M1 1 L12 11 M12 1 L1 11" stroke="#555" strokeWidth="2.200" /></svg>
                </PlainButton>
              </WindowButtons>
            </TitleBar>
            <Orb type="button" aria-label="Koperasi"><OrbIcon /></Orb>
            <MenuBar>
              {menu.map(([label, w]) => (
                <MenuTab key={label} type="button" $w={w} $active={label === 'Tabungan'}>{label}</MenuTab>
              ))}
              <MenuRight>
                <PlainButton type="button" aria-label="Collapse">
                  <svg width="12" height="10" viewBox="0 0 12 10"><path d="M1 6 L6 1 L11 6 Q11 9 8.500 8 L6 6 L3.500 8 Q1 9 1 6Z" fill="#fff" stroke="#4b4b4b" strokeWidth="1.200" /></svg>
                </PlainButton>
                <OptionsButton type="button">Options<Chevron dir="down" c="#4a84c4" s={6} /></OptionsButton>
              </MenuRight>
            </MenuBar>
          </Head>

          <Ribbon>
            {groups.map(g => (
              <Group key={g.title} $w={g.w}>
                <GroupItems>
                  {g.items.map(([label, kind, w]) => (
                    <RibbonButton key={label} type="button" $w={w}><RibbonIcon kind={kind} />{label}</RibbonButton>
                  ))}
                </GroupItems>
                <GroupTitle>{g.title}</GroupTitle>
              </Group>
            ))}
          </Ribbon>

          <DocTabs>
            <DocTab $w={146}>
              <DocTabLabel type="button"><HouseIcon />Menu Utama</DocTabLabel>
              <CloseBox type="button" aria-label="Close"><XMark /></CloseBox>
            </DocTab>
            <DocTab $w={186} $active>
              <DocTabLabel type="button"><MiniPig />Daftar Tabungan</DocTabLabel>
              <CloseBox type="button" aria-label="Close" $hot><XMark /></CloseBox>
            </DocTab>
          </DocTabs>

          <Panel>
            <SearchRow>
              <FieldLabel htmlFor="kata">Kata Kunci :</FieldLabel>
              <TextBox id="kata" type="text" />
              <PushButton type="button" $w={92}><SearchIcon />Cari</PushButton>
              <PushButton type="button" $w={38} aria-label="Refresh"><RefreshIcon /></PushButton>
            </SearchRow>
            <SortRow>
              <FieldLabel htmlFor="urut">Urut Berdasar :</FieldLabel>
              <SelectWrap>
                <Select id="urut" defaultValue="No Tabungan"><option>No Tabungan</option><option>Kode Nasabah</option></Select>
                <Chevron dir="down" c="#4a78ac" s={8} />
              </SelectWrap>
              <RadioLabel><Radio type="radio" name="arah" defaultChecked />Asc</RadioLabel>
              <RadioLabel><Radio type="radio" name="arah" />Desc</RadioLabel>
              <Total>Total data yang ditemukan : 2208</Total>
            </SortRow>

            <GridFrame>
              <Viewport>
                <Table>
                  <colgroup>{columns.map(([, w], i) => <col key={i} width={w} />)}</colgroup>
                  <thead>
                    <tr>{columns.map(([label], i) => <Th key={i} scope="col">{label}</Th>)}</tr>
                  </thead>
                  <tbody>
                    {rows.map((r, i) => (
                      <tr key={r[0]}>
                        <RowHead scope="row">{i + 1}</RowHead>
                        <Td>{r[0]}</Td>
                        <Td>{r[1]}</Td>
                        <Td>{r[2]}</Td>
                        <Td>SIMPANAN POKOK</Td>
                        <Td $align="right">0,00</Td>
                        <Td>KOP</Td>
                        <Td>KOPKARINDU</Td>
                        <Td $align="center">{r[3]}</Td>
                        <Td>{r[4]}</Td>
                      </tr>
                    ))}
                  </tbody>
                </Table>
              </Viewport>
              <VScroll>
                <Arrow type="button" aria-label="Scroll up"><Chevron dir="up" /></Arrow>
                <ThumbV>
                  <svg width="9" height="10" viewBox="0 0 9 10"><path d="M0 0.500 H9 M0 3.500 H9 M0 6.500 H9 M0 9.500 H9" stroke="#8d98b5" /></svg>
                </ThumbV>
                <Pusher />
                <Arrow type="button" aria-label="Scroll down"><Chevron dir="down" /></Arrow>
              </VScroll>
              <HScroll>
                <Arrow type="button" aria-label="Scroll left"><Chevron dir="left" /></Arrow>
                <ThumbH>
                  <svg width="10" height="8" viewBox="0 0 10 8"><path d="M0.500 0 V8 M3.500 0 V8 M6.500 0 V8 M9.500 0 V8" stroke="#8d98b5" /></svg>
                </ThumbH>
                <Pusher />
                <Arrow type="button" aria-label="Scroll right"><Chevron dir="right" /></Arrow>
              </HScroll>
            </GridFrame>

            <Actions>
              <PushButton type="button" $w={38} aria-label="Previous page"><PageArrow left /></PushButton>
              <PageLabel>Hal 1 / 56</PageLabel>
              <PushButton type="button" $w={38} aria-label="Next page"><PageArrow /></PushButton>
              <PushButton type="button" $w={92}><AddIcon />Tambah</PushButton>
              <PushButton type="button" $w={92}><EditIcon />Edit</PushButton>
              <PushButton type="button" $w={92}><RemoveIcon />Hapus</PushButton>
              <Pusher />
              <PushButton type="button" $w={92}><ReturnIcon />Tutup</PushButton>
            </Actions>
          </Panel>

          <StatusBar>
            <StatusInfo>
              <span>[ 14/08/15 09:04:37 ]</span>
              <span>[ User : ADMIN ]</span>
              <UserIcon><UserKey /><Grip /></UserIcon>
            </StatusInfo>
          </StatusBar>
        </AppWindow>

        <ClassicBar>
          <StartButton type="button"><Flag />Start</StartButton>
          <QuickLaunch>
            <PlainButton type="button" aria-label="Desktop"><Desk /></PlainButton>
            <PlainButton type="button" aria-label="Explorer"><WindowIcon /></PlainButton>
            <PlainButton type="button" aria-label="Firefox"><Firefox plate /></PlainButton>
          </QuickLaunch>
          <TaskButton type="button">
            <svg width="19" height="19" viewBox="3 3 40 40"><Cross /></svg>
            Koperasi 4.0.0.5, Host...
          </TaskButton>
          <Language type="button">EN</Language>
          <ClassicTray><NetIcon /><NoteIcon /><time>9:04 AM</time></ClassicTray>
        </ClassicBar>
      </Session>

      <HostBar>
        <HostApps>
          <HostApp type="button" aria-label="Dragon"><DragonIcon /></HostApp>
          <HostApp type="button" aria-label="Browser"><SwirlIcon /></HostApp>
          <HostApp type="button" aria-label="Firefox" $open><Firefox /></HostApp>
          <HostApp type="button" aria-label="2X Client" $open $active><TwoXIcon /></HostApp>
          <HostApp type="button" aria-label="Outlook"><OfficeIcon c="#0f72c6" letter="O" detail="mail" /></HostApp>
          <HostApp type="button" aria-label="Word" $open><OfficeIcon c="#2a5699" letter="W" detail="doc" /></HostApp>
          <HostApp type="button" aria-label="Access" $open><AccessIcon /></HostApp>
          <HostApp type="button" aria-label="PowerPoint" $open><OfficeIcon c="#d24625" letter="P" detail="chart" /></HostApp>
        </HostApps>
        <HostTray>
          <svg width="16" height="10" viewBox="0 0 16 10"><path d="M1 8.500 L8 1.500 L15 8.500" fill="none" stroke="#e8e8e8" strokeWidth="1.600" /></svg>
          <WifiIcon />
          <BluetoothIcon />
          <BatteryIcon />
          <MuteIcon />
          <ActionIcon />
          <time>9:04 AM</time>
        </HostTray>
      </HostBar>
    </Screen>
  );
}
